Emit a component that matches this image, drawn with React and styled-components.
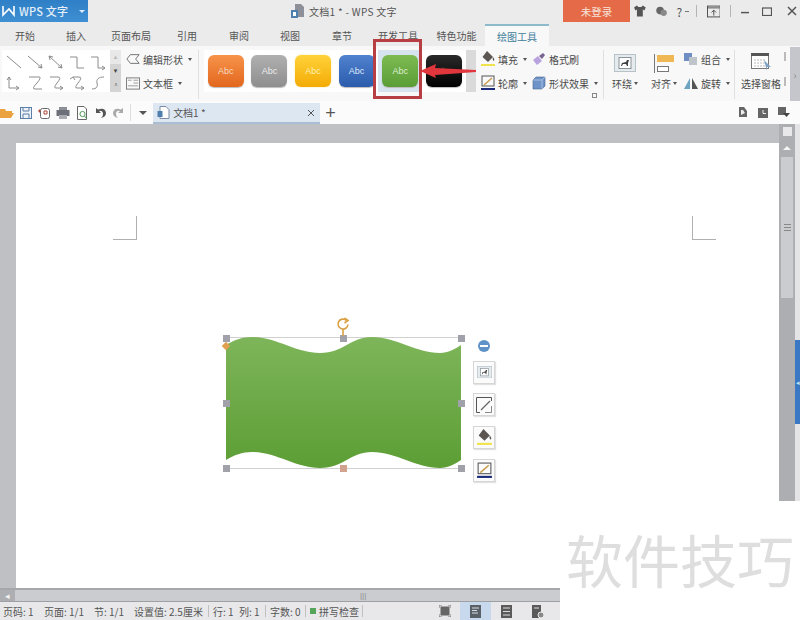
import styled, { createGlobalStyle } from "styled-components";

const GlobalStyle = createGlobalStyle`
  html, body { margin: 0; padding: 0; background: #fff; }
  * { box-sizing: border-box; }
`;

const TABS = [
  ["开始", 50], ["插入", 52], ["页面布局", 58], ["引用", 54], ["审阅", 50], ["视图", 52],
  ["章节", 52], ["开发工具", 60], ["特色功能", 57],
];

const SWATCHES = [
  { from: "#f7934a", to: "#e2671d", text: "#f6d9c0" },
  { from: "#b0b0b0", to: "#8e8e8e", text: "#ececec" },
  { from: "#ffd23a", to: "#f4ab05", text: "#fff0b0", glow: true },
  { from: "#4f82cf", to: "#2c5bac", text: "#dfe9f8" },
  { from: "#7ebb52", to: "#5a9d36", text: "#dcefcf", active: true },
  { from: "#2a2a2a", to: "#000000", text: "#444" },
];

const CONNECTORS = [
  "M3 3 L17 15",
  "M3 3 L17 15 M17 15 l-4 -1 M17 15 l-1 -4",
  "M3 3 L16 15 M3 3 l4 1 M3 3 l1 4 M16 15 l-4 -1 M16 15 l-1 -4",
  "M3 4 H10 V15 H17",
  "M3 4 H10 V15 H17 M17 15 l-3 -2 M17 15 l-3 2",
  "M5 3 l-2 3 M5 3 l2 3 M5 3 V14 H15 M15 14 l-3 -2 M15 14 l-3 2",
  "M4 3 H14 Q17 3 12 9 Q6 15 10 15 H17",
  "M4 3 H12 Q16 3 11 9 Q7 14 10 14 H17 M17 14 l-3 -2 M17 14 l-3 2",
  "M6 3 l-3 2 M6 3 l2 3 M6 3 H12 Q16 3 11 9 Q7 14 10 14 H17 M17 14 l-3 -2 M17 14 l-3 2",
  "M4 15 C9 15 10 12 9 9 C8 5 11 3 16 3",
];

const HANDLES = [
  [0, 0], [50, 0], [100, 0], [0, 50], [100, 50], [0, 100], [100, 100],
];

const Connector = ({ d }) => (
  <svg width="20" height="18" viewBox="0 0 20 18" fill="none" stroke="#8c8c8c" strokeWidth="1">
    <path d={d} />
  </svg>
);

const FillIcon = ({ size = 14 }) => (
  <svg width={size} height={size + 2} viewBox="0 0 14 16">
    <path d="M6 0 L12 6 L7 11 L1.5 6 Z" fill="#5c5652" />
    <path d="M12 6 q2 2 1 4 q-2 -1 -1 -4" fill="#5c5652" />
    <rect x="0" y="13" width="14" height="2" fill="#f0e34c" />
  </svg>
);

const OutlineIcon = ({ size = 14 }) => (
  <svg width={size} height={size + 2} viewBox="0 0 14 16" fill="none">
    <rect x="1" y="1" width="12" height="10" stroke="#555" />
    <path d="M3 10 L11 3" stroke="#c79a4a" strokeWidth="1.4" />
    <rect x="0" y="13" width="14" height="2" fill="#1b2a7a" />
  </svg>
);

const CornerIcon = () => (
  <svg width="16" height="16" viewBox="0 0 16 16" fill="none" stroke="#555">
    <path d="M15.5 4 V0.5 H0.5 V15.5 H4" />
    <path d="M9 15.5 H15.5 V9" stroke="#888" />
    <path d="M5 13 L14 4" stroke="#666" strokeWidth="1.2" />
  </svg>
);

const BrushIcon = () => (
  <svg width="14" height="14" viewBox="0 0 14 14">
    <path d="M1 8 L6 4 L10 9 L5 13 Z" fill="#b9a3df" />
    <path d="M7 4 L11 1 L13 3 L10 7 Z" fill="#77658f" />
  </svg>
);

const EffectIcon = () => (
  <svg width="14" height="14" viewBox="0 0 14 14">
    <path d="M1 4 L4 1 H13 V10 L10 13 H1 Z" fill="#6e93c9" stroke="#48668f" strokeWidth="0.6" />
    <path d="M1 4 H10 V13 M10 4 L13 1" stroke="#c2d3ea" fill="none" strokeWidth="0.7" />
  </svg>
);

const EditShapeIcon = () => (
  <svg width="14" height="12" viewBox="0 0 16 12" fill="none" stroke="#666">
    <path d="M15 1 H5 L1 6 L5 11 H15 L11 6 Z" />
  </svg>
);

const TextBoxIcon = () => (
  <svg width="14" height="13" viewBox="0 0 15 13" fill="none" stroke="#777">
    <rect x="0.5" y="0.5" width="14" height="12" />
    <path d="M2 3 H6 M8 3 H13 M8 6 H13 M2 9 H13" stroke="#999" />
  </svg>
);

const WrapIcon = ({ size = 22 }) => (
  <svg width={size} height={size * 0.82} viewBox="0 0 22 18">
    <rect x="0.5" y="0.5" width="21" height="17" fill="#e6ebee" stroke="#b5c2c7" />
    <rect x="5" y="3.5" width="12" height="11" fill="#fff" stroke="#8a9498" />
    <path d="M7 12 L8 9 L12 8 L13 6 L15 6 L14 9 L14 12 L13 12 L12 10 L9 10 L8 12 Z" fill="#3d4144" />
  </svg>
);

const AlignIcon = () => (
  <svg width="20" height="19" viewBox="0 0 20 19">
    <rect x="0" y="0" width="1" height="19" fill="#777" />
    <rect x="3" y="1" width="17" height="7" fill="#f0b854" />
    <rect x="3.5" y="12.5" width="11" height="5" fill="#fff" stroke="#777" />
  </svg>
);

const GroupIcon = () => (
  <svg width="14" height="13" viewBox="0 0 14 13">
    <rect x="0" y="0" width="8" height="8" fill="#6f8fc4" />
    <rect x="5" y="4" width="8" height="8" fill="#bfc3ca" />
  </svg>
);

const RotateIcon = () => (
  <svg width="14" height="13" viewBox="0 0 14 13">
    <path d="M6 1 V12 H0 Z" fill="#6fa3c2" />
    <path d="M8 1 V12 H14 Z" fill="#555" />
  </svg>
);

const PaneIcon = () => (
  <svg width="20" height="20" viewBox="0 0 20 20">
    <rect x="0.5" y="0.5" width="17" height="15" fill="#fff" stroke="#777" />
    <rect x="0" y="0" width="18" height="3" fill="#555" />
    <path d="M3 7 H14 M3 10 H14 M3 13 H14" stroke="#bbb" strokeDasharray="2 1" />
    <path d="M13 7 L20 14 L16 14 L16 18 Z" fill="#7da4c4" />
  </svg>
);

const QuickIcon = ({ kind }) => (
  <svg width="14" height="14" viewBox="0 0 14 14" fill="none">
    {kind === "open" && <path d="M0 3 H5 L6 5 H12 V7 H4 L1 12 H0 Z M4 7 H14 L11 12 H1 Z" fill="#eaa33f" />}
    {kind === "save" && (
      <g stroke="#5a7fa8">
        <rect x="1.5" y="1.5" width="11" height="11" fill="#eef3f8" />
        <path d="M4 2 V5 H10 V2 M4 12 V8 H10 V12" />
      </g>
    )}
    {kind === "saveas" && (
      <g stroke="#666">
        <rect x="3.5" y="2.5" width="9" height="10" rx="2" fill="#fff" />
        <path d="M7 5 h3 v3 h-3 z M1 5 H4 M2.5 3.5 V6.5" stroke="#b0473a" />
      </g>
    )}
    {kind === "print" && (
      <g>
        <rect x="3" y="1" width="8" height="3" fill="#8c8f96" />
        <rect x="0.5" y="4" width="13" height="6" fill="#6d7078" />
        <rect x="3" y="9" width="8" height="4" fill="#a9acb3" />
      </g>
    )}
    {kind === "preview" && (
      <g>
        <path d="M2.5 0.5 H9 L11.5 3 V13.5 H2.5 Z" stroke="#666" fill="#fff" />
        <circle cx="7.5" cy="8" r="2.6" stroke="#4f9a58" />
        <path d="M9.5 10 L12 13" stroke="#4f9a58" />
      </g>
    )}
    {kind === "undo" && <path d="M3 2 V7 H8 L6 5 Q9 4 10 7 Q10.5 10 8 12 Q13 11 13 7 Q12 1 5 3.6 Z" fill="#555" />}
    {kind === "redo" && <path d="M11 2 V7 H6 L8 5 Q5 4 4 7 Q3.5 10 6 12 Q1 11 1 7 Q2 1 9 3.6 Z" fill="#aaa" />}
  </svg>
);

const App = () => (
  <Window>
    <GlobalStyle />
    <TitleBar>
      <AppButton>
        <svg width="14" height="12" viewBox="0 0 14 12" fill="none" stroke="#fff" strokeWidth="1.6">
          <path d="M1 1 V10 L7 4 L12 10 V1" />
        </svg>
        <AppName>WPS 文字</AppName>
        <AppCaret />
      </AppButton>
      <DocTitle>
        <svg width="14" height="14" viewBox="0 0 14 14">
          <path d="M4 0 H10 L13 3 V13 H4 Z" fill="#8d9098" />
          <rect x="0" y="6" width="7" height="8" fill="#4f7fae" />
          <rect x="2" y="8" width="3" height="4" fill="#fff" />
        </svg>
        文档1 * - WPS 文字
      </DocTitle>
      <LoginButton>未登录</LoginButton>
      <WindowTools>
        <svg width="13" height="12" viewBox="0 0 12 11"><path d="M3 0 L0 2 L1.5 5 L3 4 V11 H9 V4 L10.5 5 L12 2 L9 0 L7.5 1.5 H4.5 Z" fill="#555" /></svg>
        <svg width="12" height="11" viewBox="0 0 12 11"><circle cx="4.5" cy="4.5" r="4.2" fill="#666" /><circle cx="8.5" cy="7" r="3.5" fill="#8a8a8a" /></svg>
        <HelpMark>?</HelpMark>
        <TinyCaret />
        <ToolDivider />
        <svg width="15" height="13" viewBox="0 0 15 13" fill="none" stroke="#444">
          <rect x="0.5" y="0.5" width="14" height="12" />
          <path d="M1 2.5 H14 M7.5 11 V5 M5 7.5 L7.5 5 L10 7.5" />
        </svg>
        <ToolDivider />
        <WinControl $width={8}><svg width="11" height="11" viewBox="0 0 11 11"><rect x="0" y="6" width="11" height="2" fill="#555" /></svg></WinControl>
        <WinControl $width={16}><svg width="10" height="9" viewBox="0 0 10 9" fill="none" stroke="#555"><rect x="0.5" y="1" width="9" height="7.5" strokeWidth="1.2" /></svg></WinControl>
        <WinControl $width={18}><svg width="10" height="10" viewBox="0 0 10 10" stroke="#555" strokeWidth="1.5"><path d="M1 1 L9 9 M9 1 L1 9" /></svg></WinControl>
      </WindowTools>
    </TitleBar>

    <TabBar>
      {TABS.map(([label, width]) => (
        <Tab key={label} $width={width}>{label}</Tab>
      ))}
      <ActiveTab>绘图工具</ActiveTab>
    </TabBar>

    <Ribbon>
      <Gallery>
        <ConnectorGrid>
          {CONNECTORS.map((d) => <Connector key={d} d={d} />)}
        </ConnectorGrid>
      </Gallery>
      <GalleryScroll>
        <ScrollCell>▴</ScrollCell>
        <ScrollCell $dark>▾</ScrollCell>
        <ScrollCell $dark>⩡</ScrollCell>
      </GalleryScroll>
      <ToolColumn>
        <ToolRow><EditShapeIcon />编辑形状<Caret /></ToolRow>
        <ToolRow><TextBoxIcon />文本框<Caret /></ToolRow>
      </ToolColumn>
      <Separator />
      <StyleGallery>
        {SWATCHES.map((s) => (
          <SwatchCell key={s.from} $active={s.active}>
            <Swatch $from={s.from} $to={s.to} $color={s.text} $glow={s.glow}>Abc</Swatch>
          </SwatchCell>
        ))}
      </StyleGallery>
      <StyleScroll />
      <FillGrid>
        <ToolRow><FillIcon />填充<Caret /></ToolRow>
        <ToolRow><BrushIcon />格式刷</ToolRow>
        <ToolRow><OutlineIcon />轮廓<Caret /></ToolRow>
        <ToolRow><EffectIcon />形状效果<Caret /></ToolRow>
        <Launcher />
      </FillGrid>
      <Separator />
      <LargeTool $width={30}>
        <LargeIcon><WrapIcon /></LargeIcon>
        <LargeLabel>环绕<Caret /></LargeLabel>
      </LargeTool>
      <LargeTool $width={36}>
        <LargeIcon><AlignIcon /></LargeIcon>
        <LargeLabel>对齐<Caret /></LargeLabel>
      </LargeTool>
      <ToolColumn $narrow>
        <ToolRow><GroupIcon />组合<Caret /></ToolRow>
        <ToolRow><RotateIcon />旋转<Caret /></ToolRow>
      </ToolColumn>
      <Separator />
      <LargeTool $width={40}>
        <LargeIcon><PaneIcon /></LargeIcon>
        <LargeLabel>选择窗格</LargeLabel>
      </LargeTool>
      <RibbonTicks><i /><i /></RibbonTicks>
      <RibbonEnd>›</RibbonEnd>
    </Ribbon>

    <QuickBar>
      <QuickIcons>
        <QuickIcon kind="open" />
        <QuickIcon kind="save" />
        <QuickIcon kind="saveas" />
        <QuickIcon kind="print" />
        <QuickIcon kind="preview" />
        <QuickIcon kind="undo" />
        <QuickIcon kind="redo" />
      </QuickIcons>
      <QuickDivider />
      <DownCaret />
      <DocTab>
        <svg width="13" height="13" viewBox="0 0 13 13">
          <path d="M3 0.5 H9 L12 3.5 V12.5 H3 Z" fill="#fff" stroke="#7a8da3" />
          <rect x="0.5" y="5" width="5" height="6" fill="#4f7fae" />
        </svg>
        <DocTabLabel>文档1 *</DocTabLabel>
        <svg width="8" height="8" viewBox="0 0 8 8" stroke="#555"><path d="M1 1 L7 7 M7 1 L1 7" /></svg>
      </DocTab>
      <AddTab>+</AddTab>
      <QuickRight>
        <svg width="10" height="11" viewBox="0 0 10 11"><path d="M1 0 H6 L9 4 V10 H1 Z" fill="#666" /><path d="M3 3 H5 L7 6 L3 8 Z" fill="#eee" /></svg>
        <svg width="10" height="10" viewBox="0 0 10 10"><rect width="10" height="10" fill="#666" /><path d="M5 2 V5.5 H8" stroke="#eee" fill="none" /></svg>
        <svg width="12" height="11" viewBox="0 0 12 11"><rect width="8" height="8" fill="#666" /><path d="M5 6 H12 L8.5 10 Z" fill="#444" /></svg>
      </QuickRight>
    </QuickBar>

    <Workspace>
      <DocArea>
        <PageSheet>
          <CropMark $side="left" />
          <CropMark $side="right" />
          <ShapeBox>
            <svg width="235" height="132" viewBox="0 0 235 132">
              <defs>
                <linearGradient id="wave" x1="0" y1="0" x2="0" y2="1">
                  <stop offset="0" stopColor="#7eb55a" />
                  <stop offset="1" stopColor="#5c9e35" />
                </linearGradient>
              </defs>
              <path
                d="M0 8 C8 3 16 0 26 0 C50 0 70 16 94 16 C118 16 124 0 146 0 C170 0 190 16 214 16 C222 16 229 12 235 8 L235 123 C229 127 222 131 214 131 C190 131 170 115 146 115 C124 115 118 131 94 131 C70 131 50 115 26 115 C16 115 8 118 0 123 Z"
                fill="url(#wave)"
              />
            </svg>
            {HANDLES.map(([x, y]) => (
              <Handle key={`${x}-${y}`} $x={x} $y={y} />
            ))}
            <Handle $x={50} $y={100} $tone="#d1a38f" />
            <Adjust />
            <RotateHandle>
              <svg width="14" height="19" viewBox="0 0 14 19" fill="none" stroke="#d9a044" strokeWidth="1.6">
                <path d="M10.5 3.5 A5 5 0 1 0 12 7.5" />
                <path d="M8.5 1 L12 3.5 L8.5 6" />
                <path d="M7 12 V19" />
              </svg>
            </RotateHandle>
          </ShapeBox>
          <SideTools>
            <CollapseDot />
            <SideButton><WrapIcon size={15} /></SideButton>
            <SideButton><CornerIcon /></SideButton>
            <SideButton><FillIcon size={15} /></SideButton>
            <SideButton><OutlineIcon size={15} /></SideButton>
          </SideTools>
        </PageSheet>
      </DocArea>
      <VScroll>
        <SplitBox />
        <ArrowUp />
        <VThumb><Grip /></VThumb>
      </VScroll>
      <SideStrip>
        <BlueTab>◂</BlueTab>
      </SideStrip>
    </Workspace>

    <HScrollRow>
      <ArrowLeftButton>◂</ArrowLeftButton>
      <HThumb>|||</HThumb>
    </HScrollRow>

    <StatusBar>
      <StatusItem $width={41}>页码: 1</StatusItem>
      <StatusItem $width={50}>页面: 1/1</StatusItem>
      <StatusItem $width={40}>节: 1/1</StatusItem>
      <StatusItem $width={73}>设置值: 2.5厘米</StatusItem>
      <StatusDivider />
      <StatusItem $width={26}>行: 1</StatusItem>
      <StatusItem $width={25}>列: 1</StatusItem>
      <StatusDivider />
      <StatusItem $width={34}>字数: 0</StatusItem>
      <StatusDivider />
      <SpellDot />
      <StatusItem $width={42}>拼写检查</StatusItem>
      <StatusDivider />
      <ViewButtons>
        <ViewButton>
          <svg width="12" height="12" viewBox="0 0 12 12"><rect x="1.5" y="1.5" width="9" height="9" fill="#666" /><path d="M0 3 V0 H3 M9 0 H12 V3 M12 9 V12 H9 M3 12 H0 V9" fill="none" stroke="#777" /></svg>
        </ViewButton>
        <ViewButton $active>
          <svg width="11" height="13" viewBox="0 0 11 13"><rect width="11" height="13" fill="#5a6068" /><path d="M2 3 H9 M2 5.5 H7 M2 8 H8" stroke="#d8dde3" /></svg>
        </ViewButton>
        <ViewButton>
          <svg width="11" height="13" viewBox="0 0 11 13"><rect width="11" height="13" fill="#5a5a5a" /><path d="M2 3 H9 M2 6.5 H9 M2 10 H9" stroke="#ddd" /></svg>
        </ViewButton>
        <ViewButton>
          <svg width="12" height="13" viewBox="0 0 12 13"><rect width="9" height="13" fill="#5a5a5a" /><path d="M2 3 H7" stroke="#ddd" /><circle cx="9" cy="10" r="3" fill="#888" stroke="#eee" /></svg>
        </ViewButton>
      </ViewButtons>
    </StatusBar>

    <Watermark>软件技巧</Watermark>

    <Callout />
    <CalloutArrow viewBox="0 0 56 18" width="56" height="18">
      <path d="M0 9 L16 2 L15 6 L56 8 L56 10 L15 13 L16 16 Z" fill="#e0363c" />
    </CalloutArrow>
  </Window>
);

export default App;

const Window = styled.div`
  position: relative;
  width: 800px;
  height: 620px;
  overflow: hidden;
  display: flex;
  flex-direction: column;
  background: #fff;
  color: #4a4a4a;
  font-family: "Noto Sans CJK SC", "Liberation Sans", sans-serif;
  font-size: 10px;
`;

const TitleBar = styled.div`
  position: relative;
  height: 24px;
  flex: none;
  display: flex;
  align-items: flex-start;
  background: #ebebeb;
`;

const AppButton = styled.div`
  width: 88px;
  height: 22px;
  display: flex;
  align-items: center;
  gap: 3px;
  padding-left: 2px;
  background: linear-gradient(#2f7fc6, #3f8fd3);
  color: #e4effa;
`;

const AppName = styled.span`
  font-size: 11px;
  font-weight: 500;
  letter-spacing: 0.2px;
`;

const AppCaret = styled.i`
  margin-left: 8px;
  border: 3px solid transparent;
  border-top: 3px solid #dcebf9;
  border-bottom: 0;
`;

const DocTitle = styled.div`
  position: absolute;
  left: 291px;
  top: 2px;
  display: flex;
  align-items: center;
  gap: 4px;
  height: 18px;
  letter-spacing: 0.3px;
  color: #555;
`;

const LoginButton = styled.div`
  margin-left: auto;
  width: 67px;
  height: 22px;
  background: #e46a48;
  color: #f7e4da;
  font-size: 10.5px;
  display: flex;
  align-items: center;
  justify-content: center;
`;

const WindowTools = styled.div`
  width: 170px;
  height: 22px;
  display: flex;
  align-items: center;
  padding-left: 4px;
  gap: 10px;
`;

const HelpMark = styled.span`
  font-size: 12px;
  color: #555;
  margin-right: -7px;
`;

const TinyCaret = styled.i`
  width: 4px;
  height: 1px;
  background: #777;
  margin-right: -3px;
`;

const ToolDivider = styled.i`
  width: 1px;
  height: 12px;
  background: #b5b5b5;
`;

const WinControl = styled.span`
  width: ${(p) => p.$width}px;
  display: flex;
  justify-content: center;
`;

const TabBar = styled.div`
  height: 22px;
  flex: none;
  display: flex;
  background: #ebebeb;
`;

const Tab = styled.div`
  width: ${(p) => p.$width}px;
  display: flex;
  align-items: center;
  justify-content: center;
  color: #555;
`;

const ActiveTab = styled(Tab)`
  width: 64px;
  background: #f8f8f8;
  border-top: 2px solid #8dbbcc;
  color: #3f7e9a;
`;

const Ribbon = styled.div`
  position: relative;
  height: 55px;
  flex: none;
  display: flex;
  padding: 4px 0 0 2px;
  background: #f8f8f8;
  > * {
    flex: none;
  }
`;

const Gallery = styled.div`
  width: 108px;
  height: 42px;
  background: #fff;
`;

const ConnectorGrid = styled.div`
  display: grid;
  grid-template-columns: repeat(5, 20px);
  grid-auto-rows: 21px;
  column-gap: 1px;
  padding: 1px 0 0 2px;
  align-items: center;
`;

const GalleryScroll = styled.div`
  width: 11px;
  height: 42px;
  display: grid;
  grid-template-rows: repeat(3, 14px);
  background: #dcdcdc;
`;

const ScrollCell = styled.div`
  display: flex;
  align-items: center;
  justify-content: center;
  font-size: 7px;
  font-family: "DejaVu Sans", sans-serif;
  color: ${(p) => (p.$dark ? "#444" : "#bbb")};
  background: ${(p) => (p.$dark ? "#d4d4d4" : "#e8e8e8")};
`;

const ToolColumn = styled.div`
  width: ${(p) => (p.$narrow ? 50 : 72)}px;
  margin-left: ${(p) => (p.$narrow ? 2 : 5)}px;
  display: flex;
  flex-direction: column;
  gap: 6px;
`;

const ToolRow = styled.div`
  height: 18px;
  display: flex;
  align-items: center;
  gap: 3px;
  color: #4a4a4a;
  white-space: nowrap;
`;

const Caret = styled.i`
  margin-left: 2px;
  border: 2px solid transparent;
  border-top: 3px solid #555;
  border-bottom: 0;
`;

const Separator = styled.div`
  width: 1px;
  height: 49px;
  background: #e0e0e0;
`;

const StyleGallery = styled.div`
  width: 262px;
  height: 42px;
  margin-left: 5px;
  display: flex;
  background: #fff;
`;

const SwatchCell = styled.div`
  width: 43.6px;
  height: 42px;
  display: flex;
  align-items: center;
  justify-content: center;
  background: ${(p) => (p.$active ? "#d7e4ef" : "transparent")};
`;

const Swatch = styled.div`
  width: 36px;
  height: 32px;
  border-radius: 6px;
  display: flex;
  align-items: center;
  justify-content: center;
  font-family: "Liberation Sans", sans-serif;
  font-size: 9px;
  color: ${(p) => p.$color};
  background: linear-gradient(${(p) => p.$from}, ${(p) => p.$to});
  box-shadow: ${(p) => (p.$glow ? "0 0 2px #f7e48f" : "0 1px 1px #bbb")};
`;

const StyleScroll = styled.div`
  width: 10px;
  height: 42px;
  background: #dadada;
`;

const FillGrid = styled.div`
  position: relative;
  width: 127px;
  display: grid;
  grid-template-columns: 51px 1fr;
  grid-auto-rows: 18px;
  row-gap: 6px;
  padding-left: 5px;
`;

const Launcher = styled.i`
  position: absolute;
  right: 6px;
  bottom: 3px;
  width: 5px;
  height: 5px;
  border: 1px solid #888;
`;

const LargeTool = styled.div`
  width: ${(p) => p.$width}px;
  margin-left: 6px;
  display: flex;
  flex-direction: column;
  align-items: center;
  white-space: nowrap;
`;

const LargeIcon = styled.div`
  height: 26px;
  display: flex;
  align-items: center;
  justify-content: center;
`;

const LargeLabel = styled.div`
  height: 14px;
  display: flex;
  align-items: center;
`;

const RibbonTicks = styled.div`
  width: 4px;
  margin-left: 3px;
  display: flex;
  flex-direction: column;
  gap: 16px;
  padding-top: 2px;
  i {
    width: 2px;
    height: 9px;
    background: #bbb;
  }
`;

const RibbonEnd = styled.div`
  width: 10px;
  height: 54px;
  margin-top: -3px;
  margin-left: auto;
  display: flex;
  align-items: center;
  justify-content: center;
  background: #c4c6cb;
  color: #8a8a8a;
`;

const QuickBar = styled.div`
  height: 23px;
  flex: none;
  display: flex;
  align-items: center;
  background: #fbfbfb;
`;

const QuickIcons = styled.div`
  display: flex;
  gap: 4.7px;
`;

const QuickDivider = styled.i`
  width: 1px;
  height: 17px;
  margin-left: 4px;
  background: #ddd;
`;

const DownCaret = styled.i`
  margin-left: 8px;
  border: 4px solid transparent;
  border-top: 4px solid #555;
  border-bottom: 0;
`;

const DocTab = styled.div`
  width: 167px;
  height: 21px;
  margin-left: 6px;
  align-self: flex-end;
  display: flex;
  align-items: center;
  gap: 3px;
  padding: 0 5px 0 4px;
  background: #dde7f2;
  border-bottom: 2px solid #a9bdd4;
`;

const DocTabLabel = styled.span`
  flex: 1;
  color: #555;
`;

const AddTab = styled.div`
  margin-left: 5px;
  font-family: "Liberation Sans", sans-serif;
  font-size: 18px;
  line-height: 18px;
  color: #555;
`;

const QuickRight = styled.div`
  margin-left: auto;
  padding-right: 10px;
  display: flex;
  align-items: center;
  gap: 10px;
`;

const Workspace = styled.div`
  height: 464px;
  flex: none;
  display: flex;
  background: #bfc0c4;
`;

const DocArea = styled.div`
  width: 779px;
  padding: 19px 0 0 16px;
`;

const PageSheet = styled.div`
  position: relative;
  width: 763px;
  height: 445px;
  background: #fff;
`;

const CropMark = styled.i`
  position: absolute;
  top: 73px;
  width: 24px;
  height: 24px;
  border-bottom: 1px solid #b0b0b0;
  ${(p) => (p.$side === "left"
    ? "left: 97px; border-right: 1px solid #b0b0b0;"
    : "left: 676px; border-left: 1px solid #b0b0b0;")}
`;

const ShapeBox = styled.div`
  position: absolute;
  left: 210px;
  top: 194px;
  width: 235px;
  height: 132px;
  border: 1px solid #d0d0d0;
  border-width: 1px 0 1px 0;
  svg {
    display: block;
    margin-top: -1px;
  }
`;

const Handle = styled.i`
  position: absolute;
  left: ${(p) => p.$x}%;
  top: ${(p) => p.$y}%;
  width: 7px;
  height: 7px;
  margin: -3.5px;
  background: ${(p) => p.$tone || "#a1a1aa"};
`;

const Adjust = styled.i`
  position: absolute;
  left: -3px;
  top: 5px;
  width: 6px;
  height: 6px;
  background: #e0a050;
  transform: rotate(45deg);
`;

const RotateHandle = styled.div`
  position: absolute;
  left: 110px;
  top: -20px;
`;

const SideTools = styled.div`
  position: absolute;
  left: 457px;
  top: 197px;
  width: 22px;
  display: flex;
  flex-direction: column;
  align-items: center;
  gap: 9.7px;
`;

const CollapseDot = styled.div`
  position: relative;
  width: 12px;
  height: 12px;
  margin-bottom: -1px;
  border-radius: 50%;
  background: #5f93c8;
  &::after {
    content: "";
    position: absolute;
    left: 2px;
    top: 5px;
    width: 8px;
    height: 2px;
    background: #fff;
  }
`;

const SideButton = styled.div`
  width: 22px;
  height: 23px;
  flex: none;
  display: flex;
  align-items: center;
  justify-content: center;
  background: #fbfbfb;
  border: 1px solid #d6d6d6;
  box-shadow: 1px 1px 1px #e2e2e2;
`;

const VScroll = styled.div`
  width: 16px;
  display: flex;
  flex-direction: column;
  align-items: center;
  background: #adaeb2;
`;

const SplitBox = styled.div`
  width: 9px;
  height: 9px;
  margin-top: 3px;
  background: #e8e8ea;
`;

const ArrowUp = styled.i`
  margin: 10px 0 7px;
  border: 4px solid transparent;
  border-bottom: 4px solid #f4f4f4;
  border-top: 0;
`;

const VThumb = styled.div`
  width: 12px;
  height: 141px;
  display: flex;
  align-items: center;
  justify-content: center;
  background: #cbccd0;
`;

const Grip = styled.i`
  width: 7px;
  height: 7px;
  border-top: 1px solid #888;
  border-bottom: 1px solid #888;
  background: linear-gradient(#888, #888) center / 100% 1px no-repeat;
`;

const SideStrip = styled.div`
  width: 5px;
  padding-top: 216px;
  background: #e4e4e6;
`;

const BlueTab = styled.div`
  height: 84px;
  display: flex;
  align-items: center;
  justify-content: center;
  overflow: hidden;
  background: #3b78c4;
  color: #bfe6ef;
  font-size: 7px;
`;

const HScrollRow = styled.div`
  width: 800px;
  height: 14px;
  flex: none;
  display: flex;
  background: #adaeb2;
  border-top: 2px solid #a6a7ab;
  border-bottom: 1px solid #9fa0a4;
`;

const ArrowLeftButton = styled.div`
  width: 15px;
  display: flex;
  align-items: center;
  justify-content: center;
  font-size: 9px;
  color: #f4f4f4;
`;

const HThumb = styled.div`
  flex: 1;
  display: flex;
  align-items: center;
  justify-content: flex-start;
  padding-left: 345px;
  font-family: "Liberation Sans", sans-serif;
  font-size: 8px;
  color: #8d8d8d;
  background: #cbccd0;
`;

const StatusBar = styled.div`
  height: 18px;
  width: 560px;
  flex: none;
  display: flex;
  align-items: center;
  padding-left: 3px;
  background: #e8e8ea;
`;

const StatusDivider = styled.i`
  width: 1px;
  height: 12px;
  margin: 0 4px 0 1px;
  background: #c0c0c0;
`;

const StatusItem = styled.span`
  width: ${(p) => p.$width}px;
  color: #555;
  white-space: nowrap;
`;

const SpellDot = styled.i`
  width: 6px;
  height: 6px;
  margin-right: 3px;
  background: #55a65a;
`;

const ViewButtons = styled.div`
  margin-left: auto;
  display: flex;
  height: 18px;
  padding-right: 7px;
`;

const ViewButton = styled.div`
  width: 31px;
  display: flex;
  align-items: center;
  justify-content: center;
  background: ${(p) => (p.$active ? "#c8d9ee" : "transparent")};
`;

const Watermark = styled.div`
  position: absolute;
  left: 560px;
  top: 501px;
  width: 240px;
  height: 119px;
  padding: 24px 0 0 6px;
  background: #fff;
  color: #dedede;
  font-size: 57px;
  font-weight: 400;
  line-height: 66px;
  white-space: nowrap;
`;

const Callout = styled.i`
  position: absolute;
  left: 373px;
  top: 39px;
  width: 49px;
  height: 60px;
  border: 3px solid #b73f44;
`;

const CalloutArrow = styled.svg`
  position: absolute;
  left: 420px;
  top: 62px;
`;
